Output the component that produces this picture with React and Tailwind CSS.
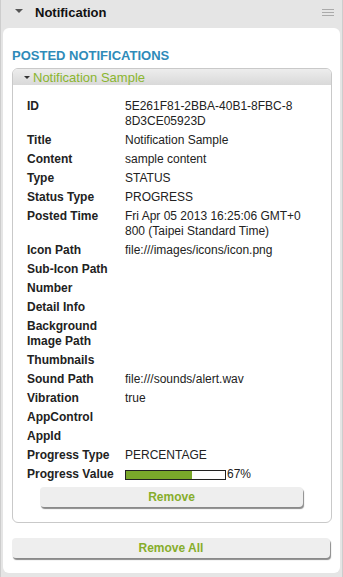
import React from 'react';

const rows = [
  ['ID', ['5E261F81-2BBA-40B1-8FBC-8', '8D3CE05923D']],
  ['Title', ['Notification Sample']],
  ['Content', ['sample content']],
  ['Type', ['STATUS']],
  ['Status Type', ['PROGRESS']],
  ['Posted Time', ['Fri Apr 05 2013 16:25:06 GMT+0', '800 (Taipei Standard Time)']],
  ['Icon Path', ['file:///images/icons/icon.png']],
  ['Sub-Icon Path', []],
  ['Number', []],
  ['Detail Info', []],
  ['Background Image Path', []],
  ['Thumbnails', []],
  ['Sound Path', ['file:///sounds/alert.wav']],
  ['Vibration', ['true']],
  ['AppControl', []],
  ['AppId', []],
  ['Progress Type', ['PERCENTAGE']],
];

const Button = ({ children, className = '' }) => (
  <button
    className={`h-[20px] rounded-[4px] bg-[#eeeeee] text-[12px] font-bold leading-[20px] text-[#86ad2b] shadow-[1px_2px_1px_#8a8a8a] ${className}`}
  >
    {children}
  </button>
);

export default function App() {
  const progress = 67;

  return (
    <div className="flex h-[577px] w-[343px] flex-col overflow-hidden border-x border-[#cdcdcd] bg-[#e5e5e5] font-['Liberation_Sans',Arial,sans-serif] text-[#222]">
      {/* header */}
      <div className="flex h-[25px] items-center pl-[14px] pr-[8px]">
        <span className="mb-[4px] h-0 w-0 border-x-[4px] border-t-[4px] border-x-transparent border-t-[#555]" />
        <span className="ml-[12px] text-[13px] font-bold text-[#111]">Notification</span>
        <span className="ml-auto mb-[1px] flex w-[12px] flex-col gap-[2px]">
          <span className="h-px bg-[#aaa]" />
          <span className="h-px bg-[#aaa]" />
          <span className="h-px bg-[#aaa]" />
        </span>
      </div>

      {/* panel */}
      <div className="mx-[2px] mt-[3px] flex h-[545px] flex-col rounded-[6px] bg-white pl-[9px] pr-[8px] pt-[20px]">
        <h2 className="text-[13px] font-bold leading-[15px] text-[#2f8bb9]">POSTED NOTIFICATIONS</h2>

        <div className="mt-[5px] overflow-hidden rounded-[6px] border border-[#c9c9c9]">
          <div className="flex h-[16px] items-center bg-gradient-to-b from-[#ededed] to-[#d9d9d9] pl-[11px]">
            <span className="mt-px h-0 w-0 border-x-[3px] border-t-[3px] border-x-transparent border-t-[#333]" />
            <span className="ml-[3px] text-[13px] leading-[15px] text-[#8ab52f]">Notification Sample</span>
          </div>

          <div className="px-[14px] pb-[15px] pt-[12px]">
            <div className="grid grid-cols-[98px_180px] text-[12px] leading-[15px]">
              {rows.map(([label, lines]) => (
                <React.Fragment key={label}>
                  <div className="py-[2px] pr-[6px] font-bold">{label}</div>
                  <div className="flex flex-col whitespace-nowrap py-[2px]">
                    {lines.map((line) => (
                      <span key={line}>{line}</span>
                    ))}
                  </div>
                </React.Fragment>
              ))}
              <div className="py-[2px] font-bold">Progress Value</div>
              <div className="flex items-center py-[2px]">
                <div className="h-[10px] w-[101px] border border-[#222] bg-white">
                  <div className="h-full bg-[#7aa82a]" style={{ width: `${progress}%` }} />
                </div>
                <span className="ml-px">{progress}%</span>
              </div>
            </div>

            <div className="mt-[3px] flex pl-[13px] pr-[14px]">
              <Button className="w-full">Remove</Button>
            </div>
          </div>
        </div>

        <div className="mt-[15px] flex pr-[2px]">
          <Button className="w-full">Remove All</Button>
        </div>
      </div>
    </div>
  );
}
